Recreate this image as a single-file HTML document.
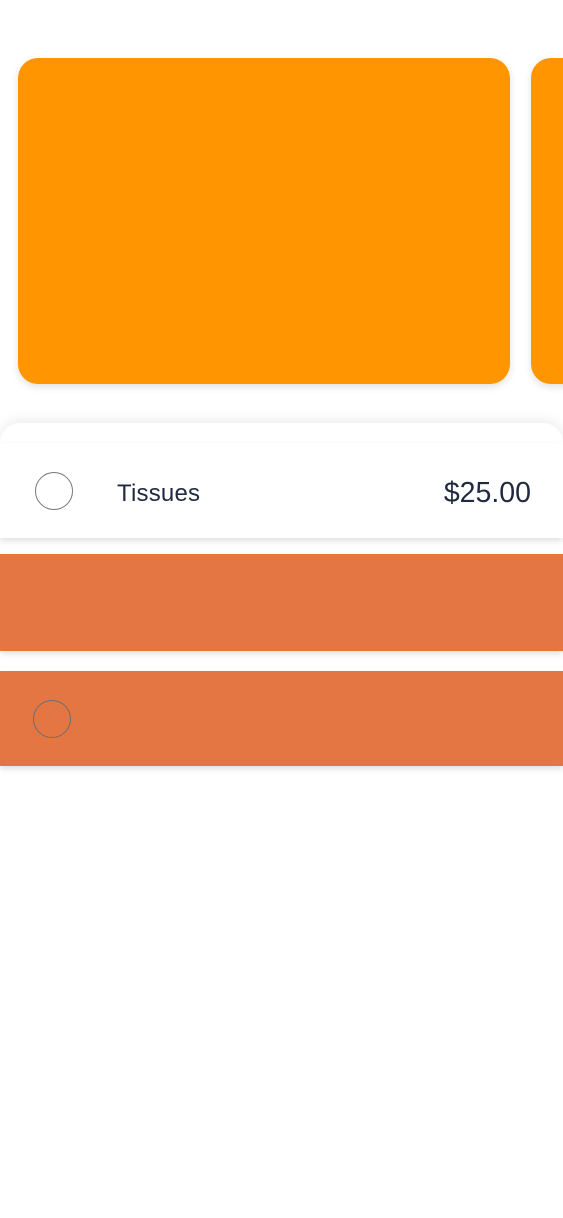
<!DOCTYPE html>
<html><head><style>
html,body{margin:0;padding:0;background:#fff;width:563px;height:1218px;overflow:hidden;font-family:"Liberation Sans",Helvetica,Arial,sans-serif;position:relative}
.card{position:absolute;top:58px;height:326px;background:#FF9500;border-radius:20px;box-shadow:0 3px 8px rgba(0,0,0,0.12)}
.sheet{position:absolute;left:0;top:423px;width:563px;height:30px;background:#fff;border-radius:20px 20px 0 0;box-shadow:0 -4px 12px rgba(0,0,0,0.07)}
.row{position:absolute;left:0;width:563px;box-shadow:0 3px 6px rgba(0,0,0,0.12)}
.circ{position:absolute;width:36px;height:36px;border:1.5px solid #777;border-radius:50%;box-sizing:border-box}
</style></head><body>
<div class="card" style="left:18px;width:492px"></div>
<div class="card" style="left:531px;width:60px"></div>
<div class="sheet"></div>
<div class="row" style="top:443px;height:95px;background:#fff">
<div class="circ" style="left:35px;top:29px;width:38px;height:38px"></div>
<div style="position:absolute;left:117px;top:37px;font-size:24px;letter-spacing:0.2px;color:#1f2a40">Tissues</div>
<div style="position:absolute;right:32px;top:34px;font-size:28.5px;color:#1f2a40">$25.00</div>
</div>
<div class="row" style="top:554px;height:97px;background:#E47644"></div>
<div class="row" style="top:671px;height:95px;background:#E47644">
<div class="circ" style="left:33px;top:29px;width:38px;height:38px;border-color:#6e6e6e"></div>
</div>
</body></html>
